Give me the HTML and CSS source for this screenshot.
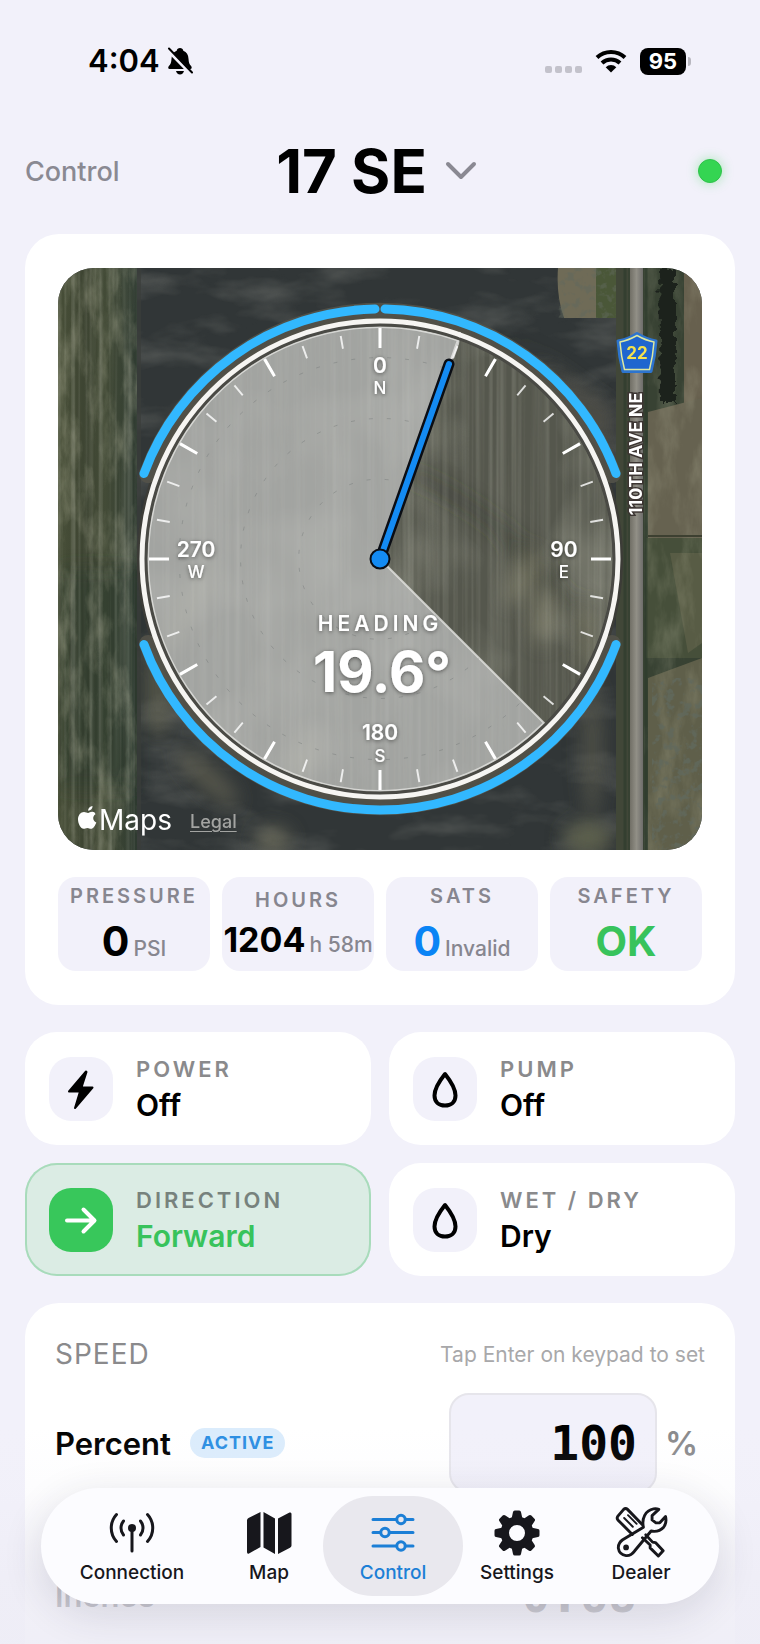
FILE: index.html
```html
<!DOCTYPE html>
<html lang="en">
<head>
<meta charset="utf-8">
<meta name="viewport" content="width=device-width, initial-scale=1">
<title>17 SE – Control</title>
<link rel="stylesheet" href="styles.css">
</head>
<body>
<div class="screen">
  <div class="status">
    <div class="status-left">
      <span class="clock">4:04</span>
      <svg class="bell" viewBox="0 0 26 28" aria-hidden="true">
        <path d="M13 1c1.800 0 3 1.100 3.300 2.700 3.400 1.200 5 4.100 5.200 8 .2 4 .9 5.600 2.600 7.300 1 1 .8 3-.8 3H2.700C1 22 .8 20 1.900 19c1.700-1.700 2.400-3.300 2.600-7.300.2-3.900 1.800-6.800 5.200-8C10 2.100 11.200 1 13 1z"/>
        <path d="M9 24h8c-.4 2-2 3.400-4 3.400S9.400 26 9 24z"/>
        <path class="bell-gap" d="M.5 2.500 25 27.500"/>
        <path class="bell-slash" d="M2 1.500 25 25.500"/>
      </svg>
    </div>
    <div class="status-right">
      <div class="dots"><i></i><i></i><i></i><i></i></div>
      <svg class="wifi" viewBox="0 0 32 24" aria-hidden="true">
        <path class="arc" d="M2 8.500a20.300 20.300 0 0 1 28 0"/>
        <path class="arc" d="M7 14a13 13 0 0 1 18 0"/>
        <path d="M16 23.500l-5.300-5.300a7.600 7.600 0 0 1 10.600 0z"/>
      </svg>
      <div class="battery"><span class="battery-body">95</span><i class="battery-tip"></i></div>
    </div>
  </div>

  <header class="header">
    <span class="header-label">Control</span>
    <button class="title" type="button">
      <span>17 SE</span>
      <svg class="chevron" viewBox="0 0 32 20" aria-hidden="true"><path d="M3 3l13 13L29 3"/></svg>
    </button>
    <i class="online"></i>
  </header>

  <main class="content">
    <section class="card overview">
      <div class="map">
        <svg viewBox="0 0 644 582" role="img" aria-label="Pivot heading over field map">
          <defs>
            <filter id="rows" x="0" y="0" width="100%" height="100%">
              <feTurbulence type="fractalNoise" baseFrequency=".22 .002" numOctaves="2" seed="4"/>
              <feColorMatrix values="0 0 0 0 .75  0 0 0 0 .76  0 0 0 0 .66  2 0 0 0 -.8"/>
            </filter>
            <filter id="patch" x="0" y="0" width="100%" height="100%">
              <feTurbulence type="fractalNoise" baseFrequency=".01 .008" numOctaves="3" seed="23"/>
              <feColorMatrix values="0 0 0 0 .72  0 0 0 0 .72  0 0 0 0 .6  2.200 0 0 0 -1"/>
            </filter>
            <filter id="grass" x="0" y="0" width="100%" height="100%">
              <feTurbulence type="fractalNoise" baseFrequency=".06 .02" numOctaves="5" seed="7"/>
              <feColorMatrix values="0 0 0 0 .5  0 0 0 0 .5  0 0 0 0 .36  2 0 0 0 -.85"/>
            </filter>
            <filter id="soil" x="0" y="0" width="100%" height="100%">
              <feTurbulence type="fractalNoise" baseFrequency=".012 .03" numOctaves="4" seed="15"/>
              <feColorMatrix values="0 0 0 0 .45  0 0 0 0 .45  0 0 0 0 .4  2 0 0 0 -.9"/>
            </filter>
            <filter id="trees" x="0" y="0" width="100%" height="100%">
              <feTurbulence type="fractalNoise" baseFrequency=".12" numOctaves="3" seed="2"/>
              <feColorMatrix values="0 0 0 0 .12  0 0 0 0 .14  0 0 0 0 .11  6 0 0 0 -3.100"/>
            </filter>
            <filter id="soft" x="-50%" y="-50%" width="200%" height="200%"><feGaussianBlur stdDeviation="9"/></filter>
            <filter id="rough" x="-50%" y="-20%" width="200%" height="140%">
              <feTurbulence type="fractalNoise" baseFrequency=".15" numOctaves="2" seed="9"/>
              <feDisplacementMap in="SourceGraphic" scale="12"/>
            </filter>
            <filter id="glow" x="-20%" y="-40%" width="140%" height="180%">
              <feDropShadow dx="0" dy="1" stdDeviation="2" flood-color="#000" flood-opacity=".5"/>
            </filter>
            <linearGradient id="strip" x2="1" y2="0">
              <stop offset="0" stop-color="#484f38"/><stop offset=".35" stop-color="#3d4432"/>
              <stop offset=".6" stop-color="#434b37"/><stop offset="1" stop-color="#2e3a30"/>
            </linearGradient>
            <linearGradient id="road" x2="1" y2="0">
              <stop offset="0" stop-color="#716f66"/><stop offset=".5" stop-color="#918f86"/><stop offset="1" stop-color="#6e6d6b"/>
            </linearGradient>
            <clipPath id="field"><circle cx="322" cy="291" r="240"/></clipPath>
          </defs>

          <rect width="644" height="582" fill="#313637"/>
          <rect width="644" height="582" filter="url(#soil)" opacity=".28"/>
          <g filter="url(#soft)">
            <ellipse cx="100" cy="420" rx="16" ry="50" fill="#666653" opacity=".6"/>
            <ellipse cx="150" cy="510" rx="40" ry="12" fill="#6d6b58" opacity=".6" transform="rotate(42 150 510)"/>
            <ellipse cx="215" cy="572" rx="18" ry="14" fill="#7a7864" opacity=".6"/>
            <path d="M440 60l40 30q50 60 74 110v-60z" fill="#4d4e46"/>
            <ellipse cx="534" cy="480" rx="10" ry="70" fill="#5c5d4f" opacity=".7"/>
            <ellipse cx="530" cy="570" rx="24" ry="16" fill="#5d604e"/>
          </g>
          <path d="M500 0h38v50h-32q-8-22-6-50z" fill="#6f6b57"/>
          <path d="M538 0h28v50h-28z" fill="#4a5738"/>
          <rect x="500" width="66" height="50" filter="url(#trees)" opacity=".5"/>

          <rect width="79" height="582" fill="url(#strip)"/>
          <rect y="300" width="79" height="220" fill="#27352a" opacity=".45" filter="url(#soft)"/>
          <rect width="79" height="582" filter="url(#grass)" opacity=".42"/>
          <rect width="79" height="582" filter="url(#rows)" opacity=".25"/>
          <path d="M79 0h4v582h-4z" fill="#3a3d3a" opacity=".7"/>

          <rect x="558" width="86" height="582" fill="#384233"/>
          <rect x="626" width="18" height="140" fill="#67604e"/>
          <path d="M590 144l54-14v165l-54-8z" fill="#666250"/>
          <path d="M588 270h56v120h-56z" fill="#464f3a"/>
          <path d="M612 285h32v90l-14 10z" fill="#585c45"/>
          <path d="M590 410l54-20v192h-54z" fill="#5f5f4a"/>
          <rect x="586" width="58" height="582" filter="url(#grass)" opacity=".28"/>
          <rect x="594" y="410" width="50" height="172" filter="url(#trees)" opacity=".8"/>
          <path d="M601 0h16v134h-14z" fill="#1c231d" filter="url(#rough)"/>
          <path d="M590 268h54" stroke="#3d4031" stroke-width="2"/>
          <rect x="558" width="12" height="582" fill="#4a4c3e" opacity=".5"/>
          <rect x="572" width="13" height="582" fill="url(#road)"/>
          <path d="M567 0v582M588 0v582" stroke="#2c3a2c" stroke-width="3" opacity=".6"/>

          <g clip-path="url(#field)">
            <rect x="80" y="50" width="484" height="484" fill="#55574d"/>
            <rect x="80" y="50" width="484" height="484" filter="url(#patch)" opacity=".32"/>
            <g filter="url(#soft)">
              <g fill="none" stroke="#34362e" stroke-width="10" opacity=".6">
                <path d="M350 205q70 30 120 80t60 110"/><path d="M440 255q30 60 80 80"/>
              </g>
              <g fill="#8c8b75" opacity=".5">
                <ellipse cx="465" cy="310" rx="12" ry="30" transform="rotate(30 465 310)"/>
                <ellipse cx="485" cy="350" rx="12" ry="28"/>
                <ellipse cx="530" cy="370" rx="9" ry="34"/>
                <ellipse cx="130" cy="340" rx="14" ry="50" transform="rotate(30 130 340)"/>
                <ellipse cx="245" cy="490" rx="16" ry="30" transform="rotate(30 245 490)"/>
              </g>
            </g>
            <rect x="80" y="50" width="484" height="484" filter="url(#rows)" opacity=".2"/>
          </g>
          <circle cx="322" cy="291" r="238" fill="none" stroke="#3c3c37" stroke-width="10"/>
          <g fill="none" stroke="#55544a" stroke-opacity=".85" stroke-width="18" stroke-linecap="round">
            <path d="M90 206A247 247 0 0 1 554 206"/>
            <path d="M90 376A247 247 0 0 0 554 376"/>
          </g>

          <path d="M322 291 486 455A232 232 0 1 1 399.800 72.400Z" fill="#c3c5c5" fill-opacity=".7" stroke="#e9e9e7" stroke-opacity=".75" stroke-width="2"/>
          <g fill="none" stroke="#6d7274" stroke-opacity=".4" stroke-width="1" stroke-dasharray="4 14">
            <path d="M386 100A201 201 0 1 0 464 433"/>
            <path d="M368 158A140 140 0 1 0 421 390"/>
            <path d="M348 216A80 80 0 1 0 378 347"/>
          </g>
          <path d="M393 92 400 76l2-12" fill="none" stroke="#e4e4e2" stroke-width="2" opacity=".8"/>

          <circle cx="322" cy="291" r="234" fill="none" stroke="#4a4a45" stroke-width="3"/>
          <circle cx="322" cy="291" r="238" fill="none" stroke="#f6f5f2" stroke-width="5"/>
          <g fill="none" stroke="#32b8ff" stroke-width="9" stroke-linecap="round">
            <path d="M86 205.500A251 251 0 0 1 317 41"/>
            <path d="M327 41A251 251 0 0 1 558 205.500"/>
            <path d="M86 376.500A251 251 0 0 0 558 376.500"/>
          </g>
          <circle cx="322" cy="291" r="220" fill="none" stroke="#fff" stroke-opacity=".8" stroke-width="13" pathLength="360" stroke-dasharray=".5 9.500" stroke-dashoffset=".25"/>
          <circle cx="322" cy="291" r="221" fill="none" stroke="#fff" stroke-width="20" pathLength="360" stroke-dasharray=".8 29.200" stroke-dashoffset=".4"/>

          <path d="M322 291 391 96" stroke="#0a0d14" stroke-width="11" stroke-linecap="round"/>
          <path d="M322 291 391 96" stroke="#148bf3" stroke-width="6" stroke-linecap="round"/>
          <circle cx="322" cy="291" r="9.500" fill="#148bf3" stroke="#0a0d14" stroke-width="2"/>

          <g class="dial" filter="url(#glow)">
            <text x="322" y="105">0</text><text class="dial-dir" x="322" y="126">N</text>
            <text x="138" y="289">270</text><text class="dial-dir" x="138" y="310">W</text>
            <text x="506" y="289">90</text><text class="dial-dir" x="506" y="310">E</text>
            <text x="322" y="472">180</text><text class="dial-dir" x="322" y="494">S</text>
            <text class="dial-caption" x="322" y="363">HEADING</text>
            <text class="dial-value" x="324" y="424">19.6°</text>
          </g>

          <path d="M579 65.500q10 6 19 7.500-1 15-5 30.500h-28q-4-15-5-30.500 10-1.500 19-7.500z" fill="#1f66cf" stroke="#2d74cf" stroke-width="3" stroke-linejoin="round"/>
          <path d="M579 67.500q9 5 17 6.500-1 14-4.500 27.500h-25q-3.500-13.500-4.500-27.500 8-1.500 17-6.500z" fill="#1f66cf" stroke="#dfe9a0" stroke-width="1.500" stroke-linejoin="round"/>
          <text class="shield" x="579" y="91">22</text>
          <text class="road-name" transform="rotate(-90)" x="-186" y="584">110TH AVE NE</text>

          <g class="brand">
            <path transform="translate(20 538)" d="M14.500 0c.2 2.300-1.900 4.800-4.300 4.700C10 2.500 12.200.200 14.500 0zM17.500 8.200c-3.300 2-2.900 6.700.8 8.300-1.200 3.200-3 6.300-5.300 6.300-1.500 0-2-.9-3.700-.9s-2.300.9-3.700.9C2.800 22.800 0 17.700 0 13.500 0 9 2.800 5.900 6 5.900c1.700 0 2.800 1 4 1 1.100 0 2.400-1.200 4.500-1.100 1.300.1 2.400.7 3 2.400z"/>
            <text x="41" y="562">Maps</text>
          </g>
        </svg>
        <a class="legal" href="#legal">Legal</a>
      </div>

      <div class="stats">
        <div class="stat"><span class="stat-label">PRESSURE</span><span class="stat-row"><b>0</b><small>PSI</small></span></div>
        <div class="stat compact"><span class="stat-label">HOURS</span><span class="stat-row"><b>1204</b><small>h 58m</small></span></div>
        <div class="stat"><span class="stat-label">SATS</span><span class="stat-row"><b class="blue">0</b><small>Invalid</small></span></div>
        <div class="stat"><span class="stat-label">SAFETY</span><span class="stat-row"><b class="green">OK</b></span></div>
      </div>
    </section>

    <section class="controls">
      <button class="tile" type="button">
        <span class="tile-icon"><svg viewBox="0 0 64 64" aria-hidden="true"><path class="solid" d="M37 14.500 20 34.500h11L26 51 43.500 30.500H32.500L37.500 15z"/></svg></span>
        <span class="tile-text"><span class="tile-label">POWER</span><span class="tile-value">Off</span></span>
      </button>
      <button class="tile" type="button">
        <span class="tile-icon"><svg viewBox="0 0 64 64" aria-hidden="true"><path class="line" d="M32 17C28 22 21.500 31 21.500 38.500 21.500 45 26 48.500 32 48.500S42.500 45 42.500 38.500C42.500 31 36 22 32 17z"/></svg></span>
        <span class="tile-text"><span class="tile-label">PUMP</span><span class="tile-value">Off</span></span>
      </button>
      <button class="tile active" type="button">
        <span class="tile-icon"><svg viewBox="0 0 64 64" aria-hidden="true"><path class="line" d="M18 32.500H45M34.500 21.500l11 11-11 11"/></svg></span>
        <span class="tile-text"><span class="tile-label">DIRECTION</span><span class="tile-value">Forward</span></span>
      </button>
      <button class="tile" type="button">
        <span class="tile-icon"><svg viewBox="0 0 64 64" aria-hidden="true"><path class="line" d="M32 17C28 22 21.500 31 21.500 38.500 21.500 45 26 48.500 32 48.500S42.500 45 42.500 38.500C42.500 31 36 22 32 17z"/></svg></span>
        <span class="tile-text"><span class="tile-label">WET / DRY</span><span class="tile-value">Dry</span></span>
      </button>
    </section>

    <section class="card speed">
      <div class="speed-head"><h2>SPEED</h2><span class="hint">Tap Enter on keypad to set</span></div>
      <div class="field-row">
        <label for="percent">Percent</label><span class="badge">ACTIVE</span>
        <input id="percent" type="text" inputmode="decimal" value="100"><span class="unit">%</span>
      </div>
      <div class="field-row dim">
        <label for="inches">Inches</label>
        <input id="inches" type="text" inputmode="decimal" value="0.68"><span class="unit"></span>
      </div>
    </section>
  </main>

  <div class="fade"></div>
  <nav class="tabs">
    <a class="tab" href="#connection">
      <svg viewBox="0 0 48 48" aria-hidden="true"><circle class="solid" cx="24" cy="20" r="4"/><path class="bar" d="M24 21v22"/><path class="wave" d="M15.500 13a11 11 0 0 0 0 14M32.500 13a11 11 0 0 1 0 14M8.500 6.500a20 20 0 0 0 0 27M39.500 6.500a20 20 0 0 1 0 27"/></svg>
      <span>Connection</span>
    </a>
    <a class="tab" href="#map">
      <svg viewBox="0 0 48 48" aria-hidden="true"><path class="solid" d="M3.500 10 15.500 4v35L4 45.500q-2 .8-2-1.500V12.500q0-1.800 1.500-2.500zM18.500 4 30 10.500V46L18.500 39.500zM33 10.500 44.500 4.600q2-.8 2 1.400V37.500q0 1.500-1.500 2.200L33 46z"/></svg>
      <span>Map</span>
    </a>
    <a class="tab current" href="#control" aria-current="page">
      <svg viewBox="0 0 48 48" aria-hidden="true"><path class="bar" d="M4 11.500h40M4 24.500h40M4 38h40"/><g class="knob"><circle cx="32" cy="11.500" r="4.200"/><circle cx="16" cy="24.500" r="4.200"/><circle cx="32" cy="38" r="4.200"/></g></svg>
      <span>Control</span>
    </a>
    <a class="tab" href="#settings">
      <svg viewBox="0 0 48 48" aria-hidden="true"><g class="solid"><path fill-rule="evenodd" d="M24 8.500a16.500 16.500 0 1 1 0 33 16.500 16.500 0 0 1 0-33zm0 8.500a8 8 0 1 0 0 16 8 8 0 0 0 0-16z"/><g id="teeth"><path id="tooth" d="M18.500 11 20 4q.3-1.500 1.800-1.500h4.400q1.500 0 1.800 1.500l1.500 7z"/><use href="#tooth" transform="rotate(45 24 25)"/><use href="#tooth" transform="rotate(90 24 25)"/><use href="#tooth" transform="rotate(135 24 25)"/></g><use href="#teeth" transform="rotate(180 24 25)"/></g></svg>
      <span>Settings</span>
    </a>
    <a class="tab" href="#dealer">
      <svg class="tools" viewBox="0 0 54 54" aria-hidden="true">
        <path d="M18 29.500 3 14.500q-1.500-2 0-4l6-7q2-2 4 0L28 19M28.500 33l8 7.500v3l8.500 8.500 5-5.500-8-8.500-3-.5L32 30"/>
        <path class="thin" d="M9.500 12.500l9 9M13.500 9.500l9 9"/>
        <path d="M29.500 22C27.500 13 31.500 4.500 40 3q3-.5 5.500.5L38.500 10v4.500l4 3h4l6-6.500q1.500 6.500-2 11-5 5.500-13 4L20.500 46.500q-4 5.500-9 5-7-1-8-7.500-.5-5.500 4.500-9z"/>
        <circle class="solid" cx="11.500" cy="43" r="1.500"/>
      </svg>
      <span>Dealer</span>
    </a>
  </nav>
</div>
</body>
</html>
```
FILE: styles.css
```css
* { box-sizing: border-box; }
body {
  margin: 0;
  background: #f2f1fa;
  color: #000;
  font-family: Inter, "Liberation Sans", sans-serif;
}
button { font: inherit; color: inherit; border: 0; background: none; padding: 0; cursor: pointer; }
.screen { position: relative; height: 100vh; overflow: hidden; }

/* Status bar */
.status { display: flex; justify-content: space-between; align-items: center; height: 122px; padding: 0 69px 0 88px; }
.status-left, .status-right { display: flex; align-items: center; }
.status-left { gap: 7px; }
.clock { font-size: 31px; font-weight: 600; line-height: 40px; }
.bell { width: 26px; height: 28px; }
.bell path { fill: #000; }
.bell .bell-gap { stroke: #f2f1fa; stroke-width: 4; }
.bell .bell-slash { stroke: #000; stroke-width: 2; stroke-linecap: round; }
.status-right { gap: 13px; }
.dots { display: flex; gap: 3px; padding-top: 16px; }
.dots i { width: 7px; height: 7px; border-radius: 2px; background: #c3c2cb; }
.wifi { width: 32px; height: 24px; }
.wifi .arc { fill: none; stroke: #000; stroke-width: 4; }
.battery { display: flex; align-items: center; gap: 2px; }
.battery-body { width: 46px; height: 27px; border-radius: 8px; background: #000; color: #fff; font-size: 22px; font-weight: 700; line-height: 27px; text-align: center; }
.battery-tip { width: 3px; height: 9px; border-radius: 0 4px 4px 0; background: #b8b7bf; }

/* Header */
.header { display: grid; grid-template-columns: 1fr auto 1fr; align-items: center; height: 98px; padding: 0 38px 0 25px; }
.header-label { color: #8a8992; font-size: 27px; font-weight: 500; }
.title { display: flex; align-items: center; gap: 18px; padding-left: 6px; font-size: 60px; font-weight: 700; line-height: 70px; }
.chevron { width: 32px; height: 20px; fill: none; stroke: #8a8992; stroke-width: 4; stroke-linecap: round; stroke-linejoin: round; }
.online { justify-self: end; width: 24px; height: 24px; border-radius: 50%; background: #34d552; border: 1px solid #2fc24b; box-shadow: 0 0 12px rgba(52, 213, 82, .4); }

/* Content */
.content { display: flex; flex-direction: column; gap: 27px; padding: 14px 25px 0; }
.card { background: #fff; border-radius: 34px; }
.overview { padding: 34px 33px; display: flex; flex-direction: column; gap: 27px; }
.map { position: relative; border-radius: 36px; overflow: hidden; }
.map svg { display: block; width: 100%; height: auto; }
.map text { fill: #fff; text-anchor: middle; }
.dial text { font-size: 21px; font-weight: 600; }
.dial .dial-dir { font-size: 17px; font-weight: 500; }
.dial .dial-caption { font-size: 21px; font-weight: 600; letter-spacing: 4px; }
.dial .dial-value { font-size: 56px; font-weight: 700; }
.map .shield { fill: #f4e24c; font-size: 17px; font-weight: 700; }
.map .road-name { font-size: 18px; font-weight: 700; paint-order: stroke; stroke: #3c3532; stroke-width: 3px; }
.brand path { fill: #fff; }
.map .brand text { font-size: 28px; font-weight: 400; text-anchor: start; }
.legal { position: absolute; left: 132px; bottom: 17px; color: #a3a4a2; font-size: 18px; font-weight: 500; line-height: 22px; text-underline-offset: 3px; }

.stats { display: grid; grid-template-columns: repeat(4, minmax(0, 1fr)); gap: 12px; }
.stat { display: flex; flex-direction: column; align-items: center; height: 94px; padding-top: 7px; gap: 8px; border-radius: 18px; background: #f2f1fa; }
.stat-label { color: #87868f; font-size: 20px; font-weight: 600; line-height: 24px; letter-spacing: 3px; }
.stat-row { display: flex; align-items: baseline; gap: 4px; line-height: 50px; white-space: nowrap; }
.stat-row b { font-size: 41px; font-weight: 700; }
.stat-row small { color: #87868f; font-size: 21px; font-weight: 500; }
.compact { padding-top: 11px; gap: 5px; }
.compact .stat-row { line-height: 46px; }
.compact b { font-size: 34px; }
.stat-row .blue { color: #0a84f5; }
.stat-row .green { color: #38c35c; }

.controls { display: grid; grid-template-columns: repeat(2, minmax(0, 1fr)); gap: 18px; }
.tile { display: flex; align-items: center; gap: 23px; height: 113px; padding: 0 24px; border-radius: 32px; background: #fff; text-align: left; }
.tile-icon { flex: none; width: 64px; height: 64px; border-radius: 22px; background: #f2f1fa; }
.tile-icon svg { display: block; }
.tile-icon .solid { stroke: #000; stroke-width: 2; stroke-linejoin: round; }
.tile-icon .line { fill: none; stroke: #000; stroke-width: 4; stroke-linecap: round; stroke-linejoin: round; }
.tile-text { display: flex; flex-direction: column; }
.tile-label { color: #8a8a8c; font-size: 22px; font-weight: 600; line-height: 32px; letter-spacing: 3px; }
.tile-value { font-size: 30px; font-weight: 600; line-height: 40px; }
.tile.active { background: #dbece4; box-shadow: inset 0 0 0 2px #a8dbbb; }
.active .tile-icon { background: #38c75b; }
.active .tile-icon .line { stroke: #fff; }
.active .tile-label { color: #77827d; }
.active .tile-value { color: #38c35c; }

.speed { padding: 30px 30px 60px; display: flex; flex-direction: column; }
.speed-head { display: flex; justify-content: space-between; align-items: center; height: 42px; color: #8a8a8c; }
.speed-head h2 { margin: 0; font-size: 28px; font-weight: 400; letter-spacing: 1px; }
.hint { color: #a8a8aa; font-size: 21px; }
.field-row { display: flex; align-items: center; margin-top: 18px; height: 100px; }
.field-row + .field-row { margin-top: 52px; }
.field-row label { font-size: 31px; font-weight: 600; }
.badge { margin-left: 19px; padding: 0 11px; border-radius: 15px; background: #dbecfc; color: #2a8de2; font-size: 18px; font-weight: 700; line-height: 30px; letter-spacing: 1px; }
.field-row input { margin-left: auto; width: 208px; height: 100px; padding: 0 18px; border: 2px solid #e6e5eb; border-radius: 20px; background: #f2f1fa; color: #000; font: 700 48px "DejaVu Sans Mono", monospace; text-align: right; }
.unit { width: 48px; padding-left: 8px; color: #8a8a8c; font-size: 33px; font-weight: 600; }
.dim input { border-color: transparent; background: none; }

/* Bottom bar */
.fade { position: absolute; inset: auto 0 0; height: 240px; background: linear-gradient(rgba(238, 237, 246, 0) 10%, rgba(238, 237, 246, .12) 35%, rgba(238, 237, 246, .8) 75%, rgba(238, 237, 246, .9)); pointer-events: none; }
.tabs { position: absolute; left: 41px; right: 41px; bottom: 40px; height: 116px; padding: 8px 16px; display: grid; grid-template-columns: 150fr 124fr 124fr 124fr 124fr; border-radius: 58px; background: #fcfcff; box-shadow: 0 10px 40px rgba(40, 40, 70, .14); }
.tab { display: flex; flex-direction: column; align-items: center; padding-top: 12px; gap: 4px; border-radius: 50px; color: #17171c; font-size: 19px; font-weight: 500; line-height: 26px; text-decoration: none; }
.tab svg { width: 48px; height: 48px; overflow: visible; }
.tab .tools { width: 52px; height: 52px; margin: -2px 0; fill: none; stroke: #17171c; stroke-width: 3; stroke-linejoin: round; stroke-linecap: round; }
.tools .thin { stroke-width: 2; }
.solid { fill: currentColor; }
.bar, .wave { fill: none; stroke: currentColor; stroke-width: 3; stroke-linecap: round; }
.knob circle { fill: #e9e8ee; stroke: currentColor; stroke-width: 3; }
.current { margin: 0 -8px; background: #e9e8ee; color: #1c7fd6; }
```
